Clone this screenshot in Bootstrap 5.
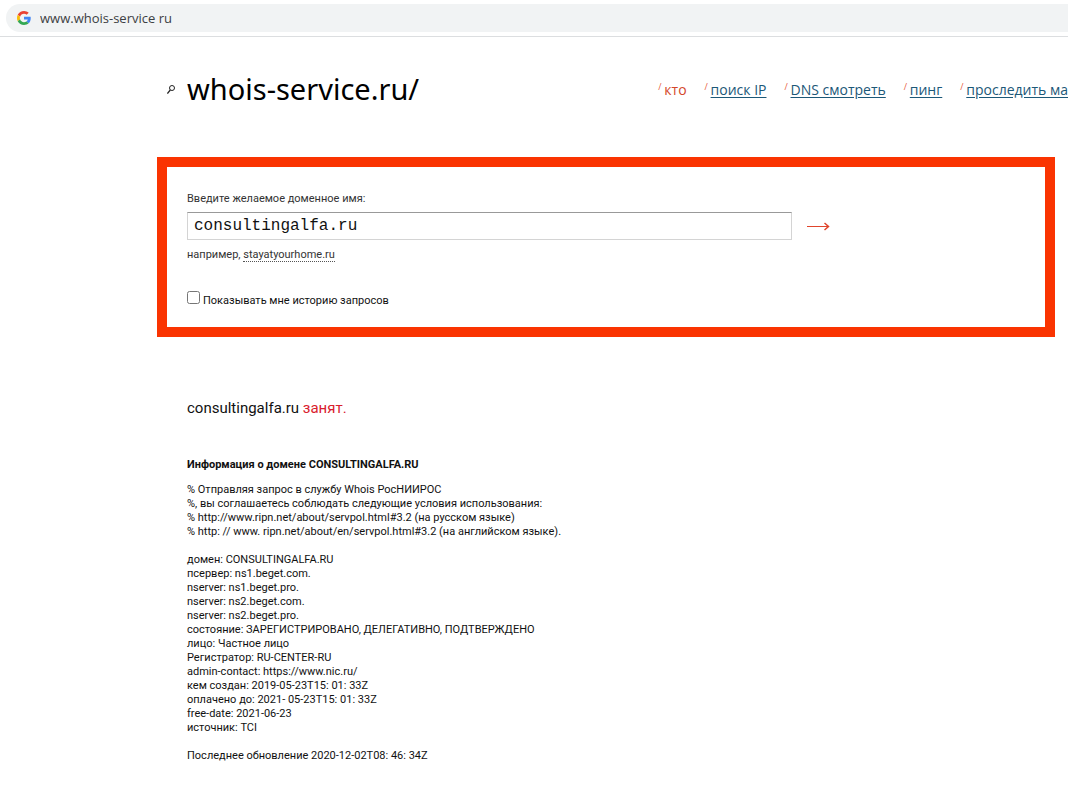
<!DOCTYPE html>
<html lang="ru">
<head>
<meta charset="utf-8">
<meta name="viewport" content="width=device-width, initial-scale=1">
<title>whois-service.ru</title>
<link rel="stylesheet" href="https://cdn.jsdelivr.net/npm/bootstrap@5.3.0/dist/css/bootstrap.min.css">
<style>
  body { font-family: Roboto, "Liberation Sans", sans-serif; font-size: 11px; line-height: 14px; color: #111; background: #fff; overflow-x: hidden; }
  .browser-bar { padding: 4px 0 4px 6px; border-bottom: 1px solid #dcdee0; }
  .address { height: 28px; padding-left: 11px; gap: 9px; background: #f1f3f4; border-radius: 14px 0 0 14px; }
  .address-icon { width: 14px; height: 14px; }
  .address-input { font: 13px/18px "Open Sans", sans-serif; color: #3c4043; outline: 0; }
  .site-head { padding: 32px 0 0 167px; height: 120px; }
  .brand { font: 29px/40px "Noto Sans", sans-serif; color: #000; margin: 0; gap: 12px; }
  .brand svg { width: 8px; height: 10px; }
  .site-nav { font: 14px/20px "Open Sans", sans-serif; gap: 18px; padding-top: 11px; }
  .site-nav li::before { content: "/"; font-size: 9px; line-height: 10px; color: #e8623f; vertical-align: 5px; display: inline-block; width: 6px; }
  .site-nav a { color: #1c5878; text-underline-offset: 2px; }
  .site-nav a.current { color: #d4472b; text-decoration: none; }
  .search-box { margin: 0 13px 0 157px; padding: 25px 20px 19px; border: 10px solid #fa3401; }
  .search-label { color: #333; margin-bottom: 6px; }
  .search-row { padding-right: 194px; gap: 13px; }
  .domain-input { height: 28px; padding: 0 6px; border: 1px solid #d4d4d4; border-top-color: #999; font: 16px/24px "Liberation Mono", monospace; color: #111; min-width: 0; outline: 0; }
  .go svg { width: 26px; height: 12px; }
  .hint { margin-top: 8px; color: #333; }
  .hint a { color: #333; text-decoration: none; border-bottom: 1px dotted #555; }
  .history { margin-top: 29px; gap: 3px; }
  .history input { width: 13px; height: 13px; margin: 0; }
  .history label { padding-top: 3px; }
  .result { padding: 61px 20px 20px 187px; }
  .status { font-size: 15px; line-height: 20px; margin-bottom: 40px; }
  .taken { color: #d9202e; }
  .result h2 { font-size: 11px; line-height: 14px; font-weight: 700; margin-bottom: 11px; }
</style>
</head>
<body>
<div class="browser-bar">
  <div class="address d-flex align-items-center">
    <svg class="address-icon" viewBox="0 0 48 48" aria-hidden="true">
      <path fill="#ea4335" d="M24 9.500c3.500 0 6.700 1.200 9.200 3.600l6.900-6.900C35.900 2.400 30.500 0 24 0 14.600 0 6.500 5.400 2.600 13.200l8 6.200C12.400 13.700 17.700 9.500 24 9.500z"/>
      <path fill="#4285f4" d="M47 24.500c0-1.600-.2-3.100-.4-4.500H24v9h12.900c-.6 3-2.300 5.500-4.800 7.200l7.700 6C44.400 38 47 31.800 47 24.500z"/>
      <path fill="#fbbc05" d="M10.500 28.600c-.5-1.500-.8-3-.8-4.600s.3-3.100.8-4.600l-8-6.200C.9 16.500 0 20.100 0 24s.9 7.500 2.600 10.800z"/>
      <path fill="#34a853" d="M24 48c6.500 0 11.900-2.100 15.900-5.800l-7.700-6c-2.200 1.500-4.900 2.300-8.200 2.300-6.300 0-11.600-4.200-13.500-9.900l-8 6.200C6.500 42.600 14.600 48 24 48z"/>
    </svg>
    <input class="address-input flex-grow-1 border-0 bg-transparent p-0" type="text" value="www.whois-service ru" aria-label="Адрес">
  </div>
</div>

<header class="site-head d-flex justify-content-between align-items-start text-nowrap">
  <h1 class="brand d-flex align-items-center">
    <svg viewBox="0 0 8 10" fill="none" stroke="#222" aria-hidden="true"><circle cx="5" cy="4" r="2.500"/><path d="M3.300 6 .4 9.500" stroke-width="1.200"/></svg>
    whois-service.ru/
  </h1>
  <nav>
    <ul class="site-nav list-unstyled d-flex mb-0">
      <li><a class="current" href="#">кто</a></li>
      <li><a href="#">поиск IP</a></li>
      <li><a href="#">DNS смотреть</a></li>
      <li><a href="#">пинг</a></li>
      <li><a href="#">проследить ма</a></li>
    </ul>
  </nav>
</header>

<main>
  <form class="search-box">
    <label class="search-label d-block" for="domain">Введите желаемое доменное имя:</label>
    <div class="search-row d-flex align-items-center">
      <input class="domain-input flex-grow-1" id="domain" type="text" value="consultingalfa.ru">
      <button class="go btn border-0 p-0 d-flex" type="button" aria-label="Проверить">
        <svg viewBox="0 0 26 12" fill="none" stroke="#e0452c" aria-hidden="true"><path d="M2 6.500H23"/><path d="M19.500 3 23.500 6.500 19.500 10" stroke-width="1.500"/></svg>
      </button>
    </div>
    <div class="hint">например, <a href="#">stayatyourhome.ru</a></div>
    <div class="history d-flex align-items-start">
      <input type="checkbox" id="history">
      <label for="history">Показывать мне историю запросов</label>
    </div>
  </form>

  <section class="result">
    <p class="status">consultingalfa.ru <span class="taken">занят.</span></p>
    <h2>Информация о домене CONSULTINGALFA.RU</h2>
    <p class="mb-0">% Отправляя запрос в службу Whois РосНИИРОС<br>
      %, вы соглашаетесь соблюдать следующие условия использования:<br>
      % http://www.ripn.net/about/servpol.html#3.2 (на русском языке)<br>
      % http: // www. ripn.net/about/en/servpol.html#3.2 (на английском языке).<br><br>
      домен: CONSULTINGALFA.RU<br>
      псервер: ns1.beget.com.<br>
      nserver: ns1.beget.pro.<br>
      nserver: ns2.beget.com.<br>
      nserver: ns2.beget.pro.<br>
      состояние: ЗАРЕГИСТРИРОВАНО, ДЕЛЕГАТИВНО, ПОДТВЕРЖДЕНО<br>
      лицо: Частное лицо<br>
      Регистратор: RU-CENTER-RU<br>
      admin-contact: https://www.nic.ru/<br>
      кем создан: 2019-05-23T15: 01: 33Z<br>
      оплачено до: 2021- 05-23T15: 01: 33Z<br>
      free-date: 2021-06-23<br>
      источник: TCI<br><br>
      Последнее обновление 2020-12-02T08: 46: 34Z</p>
  </section>
</main>
<script src="https://cdn.jsdelivr.net/npm/bootstrap@5.3.0/dist/js/bootstrap.bundle.min.js"></script>
</body>
</html>
